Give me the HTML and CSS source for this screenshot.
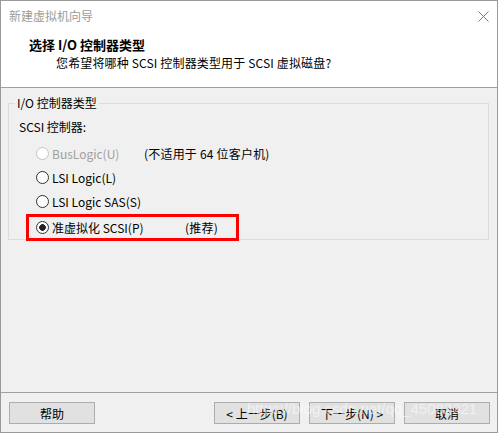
FILE: index.html
```html
<!DOCTYPE html>
<html lang="zh-CN">
<head>
    <meta charset="UTF-8">
    <title>新建虚拟机向导</title>
    <link rel="stylesheet" href="styles.css">
</head>
<body>
    <div class="window">
        <div class="titlebar">
            <span class="title">新建虚拟机向导</span>
            <svg class="close" width="11" height="11" viewBox="0 0 11 11">
                <path d="M0.5 0.5 L10.5 10.5 M10.5 0.5 L0.5 10.5" stroke="#7a7a7a" stroke-width="1" fill="none"/>
            </svg>
        </div>

        <div class="header">
            <div class="h-title">选择 I/O 控制器类型</div>
            <div class="h-sub">您希望将哪种 SCSI 控制器类型用于 SCSI 虚拟磁盘?</div>
        </div>

        <div class="content">
            <fieldset class="group">
                <legend>I/O 控制器类型</legend>
                <div class="label">SCSI 控制器:</div>
                <div class="option disabled">
                    <span class="radio"></span>
                    <span class="opt-text w-bus">BusLogic(U)</span>
                    <span class="note">(不适用于 64 位客户机)</span>
                </div>
                <div class="option">
                    <span class="radio"></span>
                    <span class="opt-text">LSI Logic(L)</span>
                </div>
                <div class="option">
                    <span class="radio"></span>
                    <span class="opt-text">LSI Logic SAS(S)</span>
                </div>
                <div class="option marked">
                    <span class="radio checked"></span>
                    <span class="opt-text w-pv">准虚拟化 SCSI(P)</span>
                    <span class="note">(推荐)</span>
                </div>
            </fieldset>
        </div>

        <div class="footer">
            <button class="btn">帮助</button>
            <div class="nav">
                <button class="btn">&lt; 上一步(B)</button>
                <button class="btn">下一步(N) &gt;</button>
                <button class="btn">取消</button>
            </div>
            <span class="watermark">https://blog.csdn.net/qq_45082321</span>
        </div>
    </div>
</body>
</html>
```

FILE: styles.css
```css
* {
    box-sizing: border-box;
}

body {
    margin: 0;
    background: #fff;
    font-family: "Noto Sans CJK SC", "Noto Sans", sans-serif;
    font-size: 12px;
    color: #000;
}

.window {
    width: 498px;
    height: 433px;
    border: 1px solid #9a9a9a;
    display: flex;
    flex-direction: column;
    background: #f0f0f0;
}

/* title bar */
.titlebar {
    height: 29px;
    background: #fff;
    display: flex;
    align-items: center;
    justify-content: space-between;
    padding: 0 8px 0 8px;
}

.title {
    color: #9b9b9b;
    line-height: 16px;
}

.close {
    margin-top: 1px;
}

/* header */
.header {
    height: 58px;
    background: #fff;
    border-bottom: 1px solid #a0a0a0;
    padding: 6px 0 0 28px;
}

.h-title {
    font-weight: bold;
    font-size: 13px;
    line-height: 17px;
}

.h-sub {
    line-height: 16px;
    letter-spacing: 0.15px;
    margin: 2px 0 0 27px;
}

/* body */
.content {
    flex: 1;
    padding: 7px 8px 0 7px;
}

.group {
    margin: 0;
    border: 1px solid #dcdcdc;
    padding: 0 0 0 8px;
}

.group legend {
    padding: 0 2px;
    margin-left: -2px;
    line-height: 16px;
}

.label {
    line-height: 16px;
    margin: 8px 0 6px 2px;
}

.option {
    height: 24px;
    display: flex;
    align-items: center;
    padding-left: 19px;
}

.radio {
    width: 13px;
    height: 13px;
    border: 1px solid #333;
    border-radius: 50%;
    background: #fff;
    flex-shrink: 0;
}

.radio.checked {
    background: radial-gradient(circle, #222 3px, #fff 3.6px);
}

.opt-text {
    margin-left: 3px;
}

.w-bus {
    width: 92px;
}

.w-pv {
    width: 133px;
}

.note {
    letter-spacing: 0.2px;
}

.disabled {
    color: #a0a0a0;
}

.disabled .radio {
    border-color: #c4c4c4;
}

.disabled .note {
    color: #000;
}

.option.marked {
    margin: 1px 0 -2px 9px;
    width: 213px;
    height: 27px;
    border: 3px solid #f00;
    padding-left: 7px;
}

/* footer */
.footer {
    position: relative;
    height: 40px;
    border-top: 1px solid #a0a0a0;
    display: flex;
    justify-content: space-between;
    padding: 9px 7px 0 8px;
}

.nav {
    display: flex;
    gap: 9px;
}

.btn {
    width: 86px;
    height: 22px;
    background: #e1e1e1;
    border: 1px solid #adadad;
    font-family: inherit;
    font-size: 12px;
    color: #000;
    padding: 0;
}

.watermark {
    position: absolute;
    left: 246px;
    top: 7px;
    font-family: "Liberation Sans", sans-serif;
    font-size: 15px;
    color: rgba(255, 255, 255, 0.55);
    white-space: nowrap;
    pointer-events: none;
}
```
